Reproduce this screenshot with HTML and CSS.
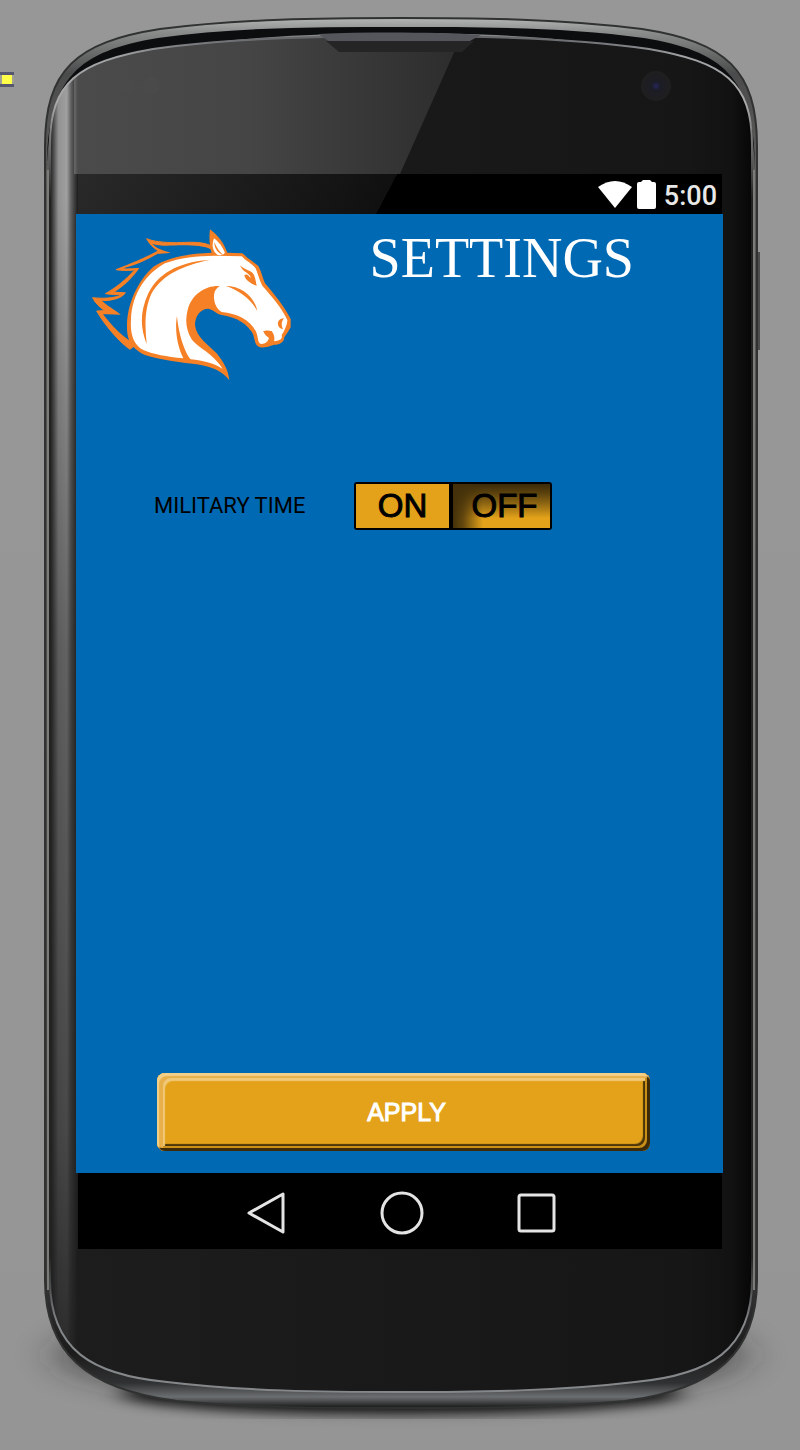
FILE: index.html
```html
<!DOCTYPE html>
<html lang="en">
<head>
<meta charset="utf-8">
<meta name="viewport" content="width=device-width, initial-scale=1">
<title>Settings</title>
<link rel="stylesheet" href="styles.css">
</head>
<body>
<div class="stage">
  <svg class="device" viewBox="0 0 800 1450" preserveAspectRatio="none" aria-hidden="true">
    <defs>
      <linearGradient id="backdrop" x1="0" y1="0" x2="0" y2="1">
        <stop offset="0" stop-color="#979797"/><stop offset="1" stop-color="#959595"/>
      </linearGradient>
      <linearGradient id="rim" x1="0" y1="0" x2="0" y2="1">
        <stop offset="0" stop-color="#b4b6b6"/><stop offset=".01" stop-color="#8b8d8d"/>
        <stop offset=".04" stop-color="#4a4b4b"/><stop offset=".1" stop-color="#5b5b59"/>
        <stop offset=".9" stop-color="#3a3a3a"/><stop offset=".96" stop-color="#1b1b1b"/>
        <stop offset=".982" stop-color="#303132"/><stop offset=".992" stop-color="#6b6e70"/><stop offset="1" stop-color="#151515"/>
      </linearGradient>
      <linearGradient id="lip" x1="0" y1="0" x2="0" y2="1">
        <stop offset="0" stop-color="#606266"/><stop offset=".015" stop-color="#a0a3a4"/>
        <stop offset=".05" stop-color="#aaa"/><stop offset=".12" stop-color="#222"/>
        <stop offset=".9" stop-color="#222"/><stop offset=".95" stop-color="#85888a"/><stop offset="1" stop-color="#85888a"/>
      </linearGradient>
      <linearGradient id="face" x1="0" y1="0" x2="1" y2="0">
        <stop offset="0" stop-color="#1d1d1d"/><stop offset=".9" stop-color="#161616"/>
        <stop offset=".96" stop-color="#121212"/><stop offset="1" stop-color="#020202"/>
      </linearGradient>
      <linearGradient id="glare" x1="0" y1="0" x2="1" y2="0">
        <stop offset="0" stop-color="#4b4b4b"/><stop offset=".45" stop-color="#454545"/><stop offset="1" stop-color="#2c2c2c"/>
      </linearGradient>
      <linearGradient id="side" x1="0" y1="0" x2="1" y2="0">
        <stop offset="0" stop-color="#fff" stop-opacity="0"/><stop offset=".12" stop-color="#fff" stop-opacity=".2"/>
        <stop offset=".3" stop-color="#fff" stop-opacity=".52"/><stop offset=".6" stop-color="#fff" stop-opacity=".58"/>
        <stop offset=".75" stop-color="#fff" stop-opacity=".3"/><stop offset="1" stop-color="#fff" stop-opacity="0"/>
      </linearGradient>
      <linearGradient id="sideFade" x1="0" y1="0" x2="0" y2="1">
        <stop offset="0" stop-color="#fff"/><stop offset=".12" stop-color="#fff"/>
        <stop offset=".45" stop-color="#888"/><stop offset=".8" stop-color="#555"/><stop offset="1" stop-color="#111"/>
      </linearGradient>
      <mask id="sideMask" maskUnits="userSpaceOnUse" x="40" y="30" width="50" height="1380"><path d="M40 30h50v1380H40z" fill="url(#sideFade)"/></mask>
      <clipPath id="faceClip"><path d="M50 145C50 82 78 62 153 49C230 38 320 36 401 36S572 38 649 49C724 62 752 82 752 145V1280C752 1350 710 1375 635 1382C560 1391 480 1392 401 1392S242 1391 167 1382C92 1375 50 1350 50 1280Z"/></clipPath>
      <filter id="soft" x="-20%" y="-60%" width="140%" height="220%"><feGaussianBlur stdDeviation="12 6"/></filter>
      <filter id="halo" x="-20%" y="-60%" width="140%" height="220%"><feGaussianBlur stdDeviation="22 14"/></filter>
      <radialGradient id="lens"><stop offset="0" stop-color="#26265c"/><stop offset=".3" stop-color="#1c1c26"/><stop offset="1" stop-color="#1f1f1f"/></radialGradient>
    </defs>
    <path d="M0 0h800v1450H0z" fill="url(#backdrop)"/>
    <ellipse cx="401" cy="1355" rx="344" ry="46" fill="#222" opacity=".6" filter="url(#halo)"/>
    <ellipse cx="401" cy="1394" rx="280" ry="20" fill="#000" opacity=".85" filter="url(#soft)"/>
    <path d="M0 1419h800v31H0z" fill="#959595" opacity=".65"/>

    <path d="M757 252h3v98h-3z" fill="#4c4c4c"/>
    <path d="M45 146C45 70 76 42 160 29C240 19 320 18 401 18S562 19 642 29C726 42 757 70 757 146V1280C757 1352 717 1389 625 1401C550 1408 480 1408 401 1408S252 1408 177 1401C85 1389 45 1352 45 1280Z" fill="url(#rim)" stroke="#303131" stroke-width="2"/>
    <path d="M47 170C47 76 80 51 158 38C235 27 320 27 401 27S567 27 644 38C722 51 755 76 755 170C753 84 724 64 649 51C572 37 480 33 401 33S230 37 153 51C78 64 49 84 47 170Z" fill="#0c0d0f"/>
    <path d="M48 170V1290M754 170V1290" fill="none" stroke="#7b7b77" stroke-width="2"/>
    <g clip-path="url(#faceClip)">
      <path d="M40 30h720v1370H40z" fill="url(#face)"/>
      <path d="M74 30H464L400 174H74z" fill="url(#glare)"/>
      <path d="M50 30h28v1370H50z" fill="url(#side)" mask="url(#sideMask)"/>
    </g>
    <path d="M50 145C50 82 78 62 153 49C230 38 320 36 401 36S572 38 649 49C724 62 752 82 752 145V1280C752 1350 710 1375 635 1382C560 1391 480 1392 401 1392S242 1391 167 1382C92 1375 50 1350 50 1280Z" fill="none" stroke="url(#lip)" stroke-width="2"/>
    <path d="M318 34C370 32 430 32 481 35L468 42H330Z" fill="#55565b"/>
    <path d="M326 41H474L462 52H339Z" fill="#252525"/>
    <circle cx="127" cy="86" r="9" fill="#4a4a4a"/><circle cx="151" cy="86" r="9" fill="#4a4a4a"/>
    <circle cx="656" cy="86" r="15" fill="url(#lens)"/>
    <path d="M0 72h14v15H0z" fill="#555770"/><path d="M0 75h14v9H0z" fill="#a0a095"/><path d="M2 75h10v9H2z" fill="#ffff4a"/>
  </svg>

  <div class="screen">
    <div class="status-bar">
      <svg class="status-icons" viewBox="0 0 60 32" aria-hidden="true">
        <path d="M0 7Q17 -5 34 7L17 28Z" fill="#fff"/>
        <path d="M39 4Q39 2 41 2H43L45 0H52L54 2H56Q58 2 58 4V27Q58 29 56 29H41Q39 29 39 27Z" fill="#fff"/>
      </svg>
      <time class="clock">5:00</time>
    </div>

    <main class="app">
      <header class="app-header">
        <svg class="logo" viewBox="0 0 660 510" role="img" aria-label="Horse head logo">
          <path fill="#f58025" stroke="#f58025" stroke-width="3" d="M398 80C370 63 330 67 290 68C250 68 217 64 200 56C207 70 220 84 235 93C192 116 152 132 108 149C125 152 145 152 164 150C137 180 107 204 76 221C90 223 110 224 126 224C100 236 67 236 38 233C44 247 57 260 74 272L50 273C72 312 116 365 150 388L260 300L420 110Z"/>
          <path fill="#0069b3" d="M392 88C370 73 300 75 262 77C245 77 227 75 217 71C228 84 246 91 272 98C256 100 242 101 233 101C202 120 164 136 130 145C147 146 160 144 178 144C160 172 132 198 105 215L138 217C130 232 102 246 66 242C80 257 104 267 122 284C105 284 86 282 69 283C94 316 127 348 146 360L200 250L300 120L400 98Z"/>
          <path fill="#f58025" d="M390 28C415 47 432 70 442 98L487 100C497 108 505 117 515 122L535 138C545 155 548 175 555 190C580 220 610 255 632 297V322C625 335 618 345 613 352C612 365 603 372 590 374C575 374 570 380 555 382C538 384 530 378 526 368C522 355 522 345 515 335C490 300 455 290 425 285C408 282 400 268 385 266C360 266 345 290 345 315C348 350 385 375 410 400C430 425 445 450 448 481C430 455 395 440 350 433C300 427 240 420 195 405C165 392 145 370 142 340C135 270 165 190 220 140C260 115 320 100 395 98C388 80 387 50 390 28Z"/>
          <path fill="#fff" d="M405 107L485 109C500 125 515 130 527 145C535 165 538 180 547 197C575 230 605 262 622 300C622 315 612 335 605 345C608 358 600 362 582 364C585 355 582 340 575 334C565 330 555 332 550 334C555 345 560 350 567 352C565 366 555 372 545 372C533 372 535 355 530 340C515 300 470 280 425 276C405 265 398 235 404 215C408 207 415 200 420 198C380 195 335 220 323 270C315 300 318 330 335 358C355 385 400 400 428 447C405 430 370 422 332 418C315 400 295 340 291 288C285 320 288 370 310 415C260 410 220 403 190 390C160 375 150 340 153 300C155 220 200 160 255 130C300 112 350 108 405 107Z"/>
          <path fill="#fff" d="M402 55C394 75 398 95 412 104C425 108 433 104 434 97C428 80 415 65 402 55Z"/>
          <path fill="#f58025" d="M403 66C403 86 413 98 430 106C418 94 409 82 403 66ZM392 119C310 125 240 150 205 220C180 275 180 320 200 372C195 320 192 270 215 220C245 165 310 135 392 119ZM480 136C495 152 515 150 522 165C527 178 528 188 530 198C515 192 496 182 493 166C500 160 505 166 512 174C512 160 488 158 480 136ZM438 198C480 198 522 225 532 273C515 240 480 212 438 198ZM612 295C588 296 588 324 609 328C603 315 604 305 612 295ZM550 334H576V362L563 350Z"/>
        </svg>
        <h1 class="title">SETTINGS</h1>
      </header>

      <section class="setting">
        <span class="setting-label" id="military-time">MILITARY TIME</span>
        <div class="toggle" role="group" aria-labelledby="military-time">
          <button class="toggle-option" type="button" aria-pressed="false">ON</button>
          <button class="toggle-option toggle-option--pressed" type="button" aria-pressed="true">OFF</button>
        </div>
      </section>

      <button class="apply" type="button">APPLY</button>
    </main>

    <nav class="nav-bar" aria-label="System">
      <button class="nav-button" type="button" aria-label="Back">
        <svg viewBox="0 0 46 46"><path d="M5 23L39 4V42Z"/></svg>
      </button>
      <button class="nav-button" type="button" aria-label="Home">
        <svg viewBox="0 0 46 46"><circle cx="23" cy="23" r="20"/></svg>
      </button>
      <button class="nav-button" type="button" aria-label="Recent apps">
        <svg viewBox="0 0 46 46"><rect x="5" y="5" width="35" height="36" rx="2"/></svg>
      </button>
    </nav>
  </div>
</div>
</body>
</html>
```

FILE: styles.css
```css
* { box-sizing: border-box; }

body {
  margin: 0;
  background: #969696;
  font-family: "Liberation Sans", Arial, sans-serif;
}

button {
  margin: 0;
  padding: 0;
  border: 0;
  font-family: inherit;
  color: inherit;
  cursor: pointer;
}

.stage {
  position: relative;
  display: flex;
  min-height: 100vh;
  padding: 174px 77px 201px 76px;
}

.device {
  position: absolute;
  inset: 0;
  width: 100%;
  height: 100%;
}

.screen {
  position: relative;
  flex: 1;
  display: flex;
  flex-direction: column;
}

.status-bar {
  display: flex;
  justify-content: flex-end;
  align-items: center;
  gap: 6px;
  height: 40px;
  margin: 0 1px 0 2px;
  padding: 3px 5px 0 0;
  background: linear-gradient(118deg, #292929 0, #101010 48%, #000 48%);
  color: #e8e8e8;
}

.status-icons { width: 60px; height: 32px; }

.clock {
  font-family: Roboto, sans-serif;
  font-size: 27px;
  line-height: 32px;
  font-weight: 500;
}

.app {
  flex: 1;
  display: flex;
  flex-direction: column;
  padding: 6px 73px 22px 4px;
  background: #0069b3;
}

.app-header {
  display: flex;
  justify-content: space-between;
  align-items: flex-start;
}

.logo { width: 220px; height: 170px; }

.title {
  margin: 6px 16px 0 0;
  color: #fff;
  font-family: "Liberation Serif", "Times New Roman", serif;
  font-size: 56px;
  line-height: 64px;
  font-weight: 400;
}

.setting {
  display: flex;
  align-items: center;
  gap: 48px;
  margin: 92px 0 0 74px;
}

.setting-label {
  min-width: 152px;
  font-family: Roboto, "Liberation Sans", sans-serif;
  font-size: 22px;
  line-height: 32px;
}

.toggle {
  display: grid;
  grid-template-columns: 93px 97px;
  gap: 4px;
  height: 48px;
  padding: 2px;
  border-radius: 3px;
  background: #000;
}

.toggle-option {
  background: #e3a21a;
  color: #000;
  font-size: 33px;
  line-height: 40px;
  -webkit-text-stroke: 1px #000;
}

.toggle-option--pressed {
  padding-left: 6px;
  background:
    linear-gradient(90deg, #43300a 0, #43300acc 10px, #43300a00 30px),
    linear-gradient(180deg, #3b2a08 0, #4a360bdd 10px, #5a410d99 20px, #e3a21a00 34px),
    #e3a21a;
}

.apply {
  height: 78px;
  margin: auto 0 0 77px;
  border-radius: 8px;
  background: #e3a21a;
  color: #fff;
  font-size: 25px;
  line-height: 32px;
  padding-left: 6px;
  -webkit-text-stroke: 1px #fff;
  box-shadow:
    inset 2px 3px 1px #f3d08a,
    inset -3px -3px 0 #3d2b07,
    inset 6px 5px 0 #e7b04a,
    inset -5px -5px 0 #c98f17,
    inset 8px 8px 1px #f0c877,
    inset -7px -7px 1px #4a350a;
}

.nav-bar {
  display: flex;
  justify-content: center;
  align-items: center;
  gap: 89px;
  height: 76px;
  margin: 0 1px 0 2px;
  padding: 4px 0 0 3px;
  background: #000;
}

.nav-button {
  width: 46px;
  height: 46px;
  background: none;
}

.nav-button svg {
  display: block;
  width: 46px;
  height: 46px;
  fill: none;
  stroke: #e4e4e4;
  stroke-width: 3;
  stroke-linejoin: round;
}
```
